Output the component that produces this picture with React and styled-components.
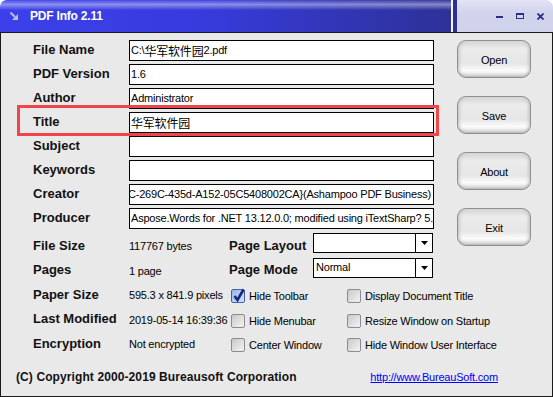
import styled, { createGlobalStyle } from "styled-components";

const GlobalStyle = createGlobalStyle`
  html, body {
    margin: 0;
    padding: 0;
    background: #ffffff;
  }
  body {
    font-family: "Liberation Sans", Arial, sans-serif;
  }
`;

const Window = styled.div`
  width: 553px;
  height: 397px;
  display: flex;
  flex-direction: column;
  overflow: hidden;
  border-radius: 7px 7px 0 0;
`;

const TitleBar = styled.div`
  height: 32px;
  display: flex;
  flex-shrink: 0;
`;

const Caption = styled.div`
  flex: 0 0 451px;
  display: flex;
  align-items: center;
  gap: 12px;
  padding-left: 10px;
  box-sizing: border-box;
  background: linear-gradient(
      to bottom,
      rgba(255, 255, 255, 0.05) 0%,
      rgba(255, 255, 255, 0.42) 14%,
      rgba(255, 255, 255, 0) 32%
    ),
    linear-gradient(to right, #3c40ea 0%, #373bdc 45%, #2d3197 100%);
`;

const CaptionText = styled.span`
  color: #ffffff;
  font-weight: bold;
  font-size: 12px;
  letter-spacing: -0.2px;
`;

const WhiteLine = styled.div`
  width: 2px;
  background: #f4f4fb;
`;

const DarkStripe = styled.div`
  width: 4px;
  background: #2c2f93;
`;

const Controls = styled.div`
  flex: 1;
  display: flex;
  align-items: center;
  gap: 13px;
  padding-left: 39px;
  background: linear-gradient(to bottom, #e2e3f4 0%, #d2d4ec 40%, #d0d2eb 100%);
`;

const MinGlyph = styled.span`
  width: 7px;
  height: 2px;
  background: #2a2c8c;
  margin-top: 2px;
`;

const MaxGlyph = styled.span`
  width: 8px;
  height: 6px;
  box-sizing: border-box;
  border: 1px solid #2a2c8c;
  border-top-width: 2px;
`;

const Body = styled.div`
  flex: 1;
  display: flex;
  flex-direction: column;
  background: #e9e9e9;
  border: 1px solid #1a1a1a;
`;

const Main = styled.div`
  display: flex;
  padding: 7px 0 0 32px;
`;

const LeftCol = styled.div`
  width: 424px;
  flex-shrink: 0;
  display: flex;
  flex-direction: column;
`;

const Fields = styled.div`
  display: flex;
  flex-direction: column;
  gap: 3px;
  width: 401px;
`;

const FieldRow = styled.div`
  position: relative;
  display: grid;
  grid-template-columns: 96px 305px;
  align-items: center;
  height: 21px;
`;

const Label = styled.span`
  font-size: 13px;
  font-weight: bold;
  color: #111111;
  white-space: nowrap;
  padding-bottom: 2px;
  width: ${(p) => p.$w || "auto"};
  flex-shrink: 0;
`;

const TextBox = styled.div`
  height: 21px;
  box-sizing: border-box;
  border: 1px solid #000000;
  background: #ffffff;
  display: flex;
  align-items: center;
  justify-content: ${(p) => (p.$end ? "flex-end" : "flex-start")};
  padding: 0 2px 0 1px;
  overflow: hidden;
  white-space: nowrap;
  font-size: 11px;
  letter-spacing: -0.2px;
  line-height: 19px;
  color: #000000;
`;

const Cjk = styled.span`
  font-family: "Noto Sans CJK SC", "Liberation Sans", sans-serif;
  font-size: 12px;
  letter-spacing: -0.2px;
  line-height: 19px;
`;

const Highlight = styled.div`
  position: absolute;
  left: -16px;
  top: -7px;
  right: -5px;
  bottom: -3px;
  border: 3px solid #f2454a;
  pointer-events: none;
`;

const Lower = styled.div`
  margin-top: 5px;
  width: 480px;
  display: flex;
  flex-direction: column;
`;

const LowerRow = styled.div`
  display: flex;
  align-items: center;
  height: 24.5px;
`;

const Value = styled.span`
  width: 100px;
  flex-shrink: 0;
  font-size: 11px;
  letter-spacing: -0.2px;
  color: #000000;
  white-space: nowrap;
`;

const Select = styled.div`
  width: 120px;
  height: 20px;
  align-self: flex-start;
  margin-top: -1px;
  box-sizing: border-box;
  border: 1px solid #000000;
  background: #ffffff;
  display: flex;
`;

const SelectText = styled.span`
  flex: 1;
  font-size: 11px;
  letter-spacing: -0.2px;
  padding-left: 2px;
  line-height: 17px;
`;

const SelectArrow = styled.span`
  width: 16px;
  border-left: 1px solid #000000;
  display: flex;
  align-items: center;
  justify-content: center;
`;

const CheckCell = styled.label`
  width: ${(p) => p.$w || "auto"};
  margin-left: ${(p) => p.$ml || "0"};
  flex-shrink: 0;
  display: flex;
  align-items: center;
  gap: 4px;
  font-size: 11px;
  letter-spacing: -0.2px;
  color: #000000;
  white-space: nowrap;
  padding-top: 2px;
`;

const Box = styled.span`
  width: 14px;
  height: 14px;
  box-sizing: border-box;
  border-radius: 2px;
  border: 1px solid ${(p) => (p.$checked ? "#3d62a6" : "#8c8c8c")};
  background: ${(p) =>
    p.$checked
      ? "linear-gradient(135deg, #93b7ea 0%, #d6e5fa 100%)"
      : "linear-gradient(135deg, #c9c9c9 0%, #f3f3f3 100%)"};
  position: relative;
`;

const CheckMark = styled.svg`
  position: absolute;
  left: 1px;
  top: -2px;
`;

const Buttons = styled.div`
  display: flex;
  flex-direction: column;
  gap: 18px;
`;

const Button = styled.div`
  width: 74px;
  height: 38px;
  box-sizing: border-box;
  border: 1px solid #8f8f8f;
  border-radius: 9px;
  display: flex;
  align-items: center;
  justify-content: center;
  padding-top: 2px;
  font-size: 11px;
  letter-spacing: -0.2px;
  color: #000000;
  background: linear-gradient(
    to bottom,
    #d8d8d8 0%,
    #ececec 22%,
    #e6e6e6 62%,
    #fcfcfc 82%,
    #dedede 100%
  );
  box-shadow: inset 0 0 4px rgba(0, 0, 0, 0.35), inset 0 2px 2px rgba(255, 255, 255, 0.8);
`;

const Footer = styled.div`
  flex: 1;
  display: flex;
  align-items: center;
  justify-content: space-between;
  padding: 1px 54px 0 15px;
`;

const Copyright = styled.span`
  font-size: 12px;
  font-weight: bold;
  color: #111111;
  letter-spacing: 0.1px;
`;

const Link = styled.a`
  font-size: 11px;
  letter-spacing: -0.2px;
  color: #0000ff;
  text-decoration: underline;
`;

function Checkbox({ checked, label, w, ml }) {
  return (
    <CheckCell $w={w} $ml={ml}>
      <Box $checked={checked}>
        {checked && (
          <CheckMark width="12" height="14" viewBox="0 0 12 14">
            <path d="M1.5 8 L4.5 12 L10.5 1.5" fill="none" stroke="#1b2580" strokeWidth="2.6" />
          </CheckMark>
        )}
      </Box>
      {label}
    </CheckCell>
  );
}

function Dropdown({ value }) {
  return (
    <Select>
      <SelectText>{value}</SelectText>
      <SelectArrow>
        <svg width="7" height="4" viewBox="0 0 7 4">
          <polygon points="0,0 7,0 3.5,4" fill="#000" />
        </svg>
      </SelectArrow>
    </Select>
  );
}

const fields = [
  { label: "File Name", value: <>C:\<Cjk>华军软件园</Cjk>2.pdf</> },
  { label: "PDF Version", value: "1.6" },
  { label: "Author", value: "Administrator" },
  { label: "Title", value: <Cjk>华军软件园</Cjk>, highlight: true },
  { label: "Subject", value: "" },
  { label: "Keywords", value: "" },
  {
    label: "Creator",
    value: "{7F1D2E3C-269C-435d-A152-05C5408002CA}(Ashampoo PDF Business)",
    end: true,
  },
  {
    label: "Producer",
    value: "Aspose.Words for .NET 13.12.0.0; modified using iTextSharp? 5.5.13",
  },
];

export default function App() {
  return (
    <>
      <GlobalStyle />
      <Window>
        <TitleBar>
          <Caption>
            <svg width="8" height="8" viewBox="0 0 8 8">
              <path d="M0.5 0.5 L5 5" stroke="#b9bcdc" strokeWidth="2" />
              <polygon points="8,2 8,8 2,8" fill="#b9bcdc" />
            </svg>
            <CaptionText>PDF Info 2.11</CaptionText>
          </Caption>
          <WhiteLine />
          <DarkStripe />
          <Controls>
            <MinGlyph />
            <MaxGlyph />
            <svg width="7" height="7" viewBox="0 0 7 7">
              <path d="M0.5 0.5 L6.5 6.5 M6.5 0.5 L0.5 6.5" stroke="#2a2c8c" strokeWidth="1.8" />
            </svg>
          </Controls>
        </TitleBar>
        <Body>
          <Main>
            <LeftCol>
              <Fields>
                {fields.map((f) => (
                  <FieldRow key={f.label}>
                    <Label>{f.label}</Label>
                    <TextBox $end={f.end}>{f.value}</TextBox>
                    {f.highlight && <Highlight />}
                  </FieldRow>
                ))}
              </Fields>
              <Lower>
                <LowerRow>
                  <Label $w="96px">File Size</Label>
                  <Value>117767 bytes</Value>
                  <Label $w="84px">Page Layout</Label>
                  <Dropdown value="" />
                </LowerRow>
                <LowerRow>
                  <Label $w="96px">Pages</Label>
                  <Value>1 page</Value>
                  <Label $w="84px">Page Mode</Label>
                  <Dropdown value="Normal" />
                </LowerRow>
                <LowerRow>
                  <Label $w="96px">Paper Size</Label>
                  <Value>595.3 x 841.9 pixels</Value>
                  <Checkbox checked label="Hide Toolbar" w="116px" ml="2px" />
                  <Checkbox label="Display Document Title" />
                </LowerRow>
                <LowerRow>
                  <Label $w="96px">Last Modified</Label>
                  <Value>2019-05-14 16:39:36</Value>
                  <Checkbox label="Hide Menubar" w="116px" ml="2px" />
                  <Checkbox label="Resize Window on Startup" />
                </LowerRow>
                <LowerRow>
                  <Label $w="96px">Encryption</Label>
                  <Value>Not encrypted</Value>
                  <Checkbox label="Center Window" w="116px" ml="2px" />
                  <Checkbox label="Hide Window User Interface" />
                </LowerRow>
              </Lower>
            </LeftCol>
            <Buttons>
              <Button>Open</Button>
              <Button>Save</Button>
              <Button>About</Button>
              <Button>Exit</Button>
            </Buttons>
          </Main>
          <Footer>
            <Copyright>(C) Copyright 2000-2019 Bureausoft Corporation</Copyright>
            <Link href="#">http://www.BureauSoft.com</Link>
          </Footer>
        </Body>
      </Window>
    </>
  );
}
